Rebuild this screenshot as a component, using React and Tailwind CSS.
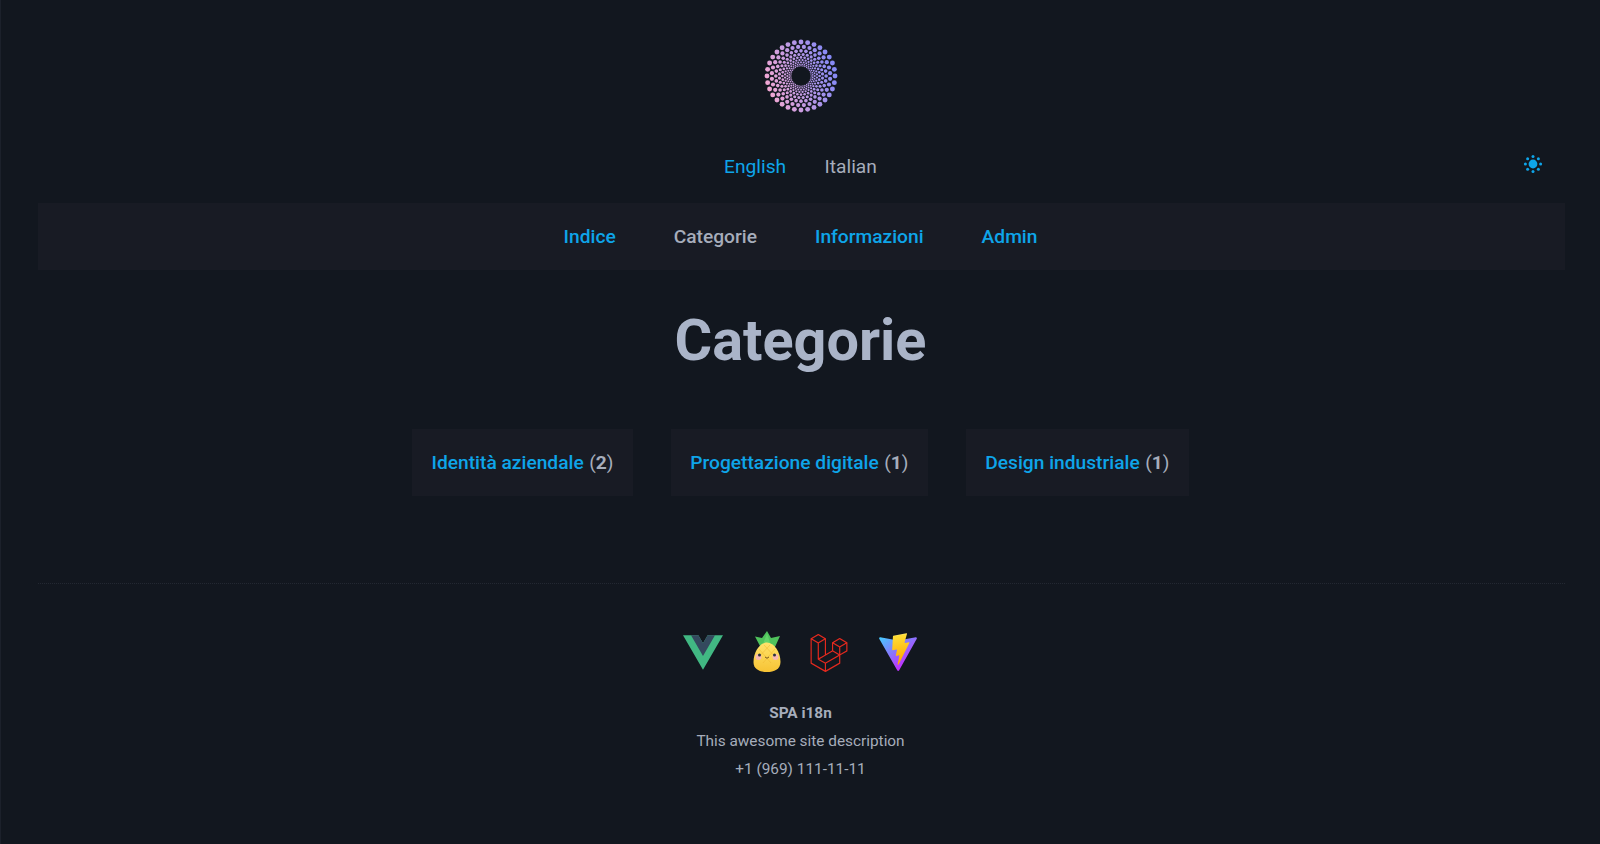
import { SiLaravel } from 'react-icons/si';

const categories = [
  { name: 'Identità aziendale', count: 2 },
  { name: 'Progettazione digitale', count: 1 },
  { name: 'Design industriale', count: 1 },
];

function Logo() {
  const dots = [];
  let r = 34;
  let i = 0;
  // rings shrink by a fixed ratio towards the hole
  while (r > 10) {
    for (let k = 0; k < 32; k++) {
      const a = ((k + (i % 2) / 2) / 32) * Math.PI * 2 - Math.PI / 2;
      dots.push(
        <circle key={`${i}-${k}`} cx={40 + r * Math.cos(a)} cy={40 + r * Math.sin(a)} r={r * 0.072} fill="url(#logoGrad)" />
      );
    }
    r *= 0.86;
    i++;
  }
  return (
    <svg width="80" height="80" viewBox="0 0 80 80">
      <defs>
        <linearGradient id="logoGrad" gradientUnits="userSpaceOnUse" x1="4" y1="52" x2="76" y2="28">
          <stop offset="0" stopColor="#f5a8d2" />
          <stop offset="1" stopColor="#8088f8" />
        </linearGradient>
      </defs>
      {dots}
    </svg>
  );
}

function SunIcon() {
  const rays = [0, 45, 90, 135, 180, 225, 270, 315];
  return (
    <svg width="20" height="20" viewBox="0 0 20 20" fill="#0ea5e9">
      <circle cx="10" cy="10" r="4.4" />
      {rays.map((d) => (
        <circle key={d} cx={10 + 7.6 * Math.cos((d * Math.PI) / 180)} cy={10 + 7.6 * Math.sin((d * Math.PI) / 180)} r="1.5" />
      ))}
    </svg>
  );
}

function VueIcon() {
  return (
    <svg width="40" height="35" viewBox="0 0 261.76 226.69">
      <path d="M161.096.001l-30.225 52.351L100.647.001H-.005l130.877 226.688L261.749.001z" fill="#41b883" />
      <path d="M161.096.001l-30.225 52.351L100.647.001H52.346l78.526 136.01L209.398.001z" fill="#34495e" />
    </svg>
  );
}

function PiniaIcon() {
  return (
    <svg width="28" height="41" viewBox="0 0 28 41" className="-mt-[2px]">
      <defs>
        <linearGradient id="piniaBody" x1="0" y1="0" x2="0" y2="1">
          <stop offset="0" stopColor="#ffe36b" />
          <stop offset="1" stopColor="#f7c334" />
        </linearGradient>
      </defs>
      <path d="M7 15 L2 5.5 L9 7 L14 0 L18 7 L27 5 L22 16 Z" fill="#4fc25c" />
      <path d="M10 13 L14 2.5 L17.5 13 Z" fill="#62d36a" />
      <path d="M14 11.5 C21 11.5 27.5 21 27.5 31 C27.5 38.5 21 41 14 41 C7 41 0.5 38.5 0.5 31 C0.5 21 7 11.5 14 11.5 Z" fill="url(#piniaBody)" />
      <path d="M6 18 L18 32 M11 14 L24 28 M22 18 L10 32 M17 14 L4 28" stroke="#eeb52f" strokeWidth="0.5" fill="none" />
      <circle cx="5.5" cy="26" r="3" fill="#f7b3c2" opacity="0.85" />
      <circle cx="22.5" cy="26" r="3" fill="#f7b3c2" opacity="0.85" />
      <circle cx="6.5" cy="24" r="1.5" fill="#2d3340" />
      <circle cx="21.5" cy="24" r="1.5" fill="#2d3340" />
      <path d="M12 26 Q14 28.5 16 26" stroke="#6b4f1d" strokeWidth="0.9" fill="none" />
    </svg>
  );
}

function ViteIcon() {
  return (
    <svg width="40" height="39" viewBox="0 0 410 404">
      <defs>
        <linearGradient id="viteA" gradientUnits="userSpaceOnUse" x1="6" y1="33" x2="235" y2="344">
          <stop stopColor="#41D1FF" />
          <stop offset="1" stopColor="#BD34FE" />
        </linearGradient>
        <linearGradient id="viteB" gradientUnits="userSpaceOnUse" x1="194.651" y1="8.818" x2="236.076" y2="292.989">
          <stop stopColor="#FFEA83" />
          <stop offset="0.0833" stopColor="#FFDD35" />
          <stop offset="1" stopColor="#FFA800" />
        </linearGradient>
      </defs>
      <path d="M399.641 59.5246L215.643 388.545C211.844 395.338 202.084 395.378 198.228 388.618L10.5817 59.5563C6.38087 52.1896 12.6802 43.2665 21.0281 44.7586L205.223 77.6824C206.398 77.8924 207.601 77.8904 208.776 77.6763L389.119 44.8058C397.439 43.2894 403.768 52.1434 399.641 59.5246Z" fill="url(#viteA)" />
      <path d="M292.965 1.5744L156.801 28.2552C154.563 28.6937 152.906 30.5903 152.771 32.8664L144.395 174.33C144.198 177.662 147.258 180.248 150.51 179.498L188.42 170.749C191.967 169.931 195.172 173.055 194.443 176.622L183.18 231.775C182.422 235.487 185.907 238.661 189.532 237.56L212.947 230.446C216.577 229.344 220.065 232.527 219.297 236.242L201.398 322.875C200.278 328.294 207.486 331.249 210.492 326.603L212.5 323.5L323.454 102.072C325.312 98.3645 322.108 94.137 318.036 94.9228L279.014 102.454C275.347 103.161 272.227 99.746 273.262 96.1583L298.731 7.86689C299.767 4.27314 296.636 0.855181 292.965 1.5744Z" fill="url(#viteB)" />
    </svg>
  );
}

export default function App() {
  return (
    <div className="min-h-screen bg-[#12171f] border-l border-[#1c212b] text-[#a6adbb] font-['Roboto',sans-serif]">
      <div className="flex justify-center pt-9">
        <Logo />
      </div>

      <div className="relative mt-[37px] flex h-7 items-center justify-center gap-[38.4px] text-[19.2px]">
        <a className="text-[#0ea5e9]">English</a>
        <a>Italian</a>
        <div className="absolute right-[57px] top-[1px]">
          <SunIcon />
        </div>
      </div>

      <nav className="ml-[37px] mr-[35px] mt-[22px] flex h-[67px] items-center justify-center gap-[58px] bg-[#181b24] pt-[2px] pr-[2px] text-[19.2px] font-medium">
        <a className="text-[#0ea5e9]">Indice</a>
        <a>Categorie</a>
        <a className="text-[#0ea5e9]">Informazioni</a>
        <a className="text-[#0ea5e9]">Admin</a>
      </nav>

      <h1 className="mt-[41px] text-center text-[57.6px] font-bold leading-[60px] text-[#aab4c8]">Categorie</h1>

      <div className="mt-[58px] flex justify-center gap-[38.4px]">
        {categories.map((c) => (
          <div key={c.name} className="flex h-[67px] items-center bg-[#181b24] px-[19.2px] pt-[2px] text-[19.2px]">
            <a className="font-medium text-[#0ea5e9]">{c.name}</a>
            <span className="ml-[5.5px]">
              (<b className="font-bold">{c.count}</b>)
            </span>
          </div>
        ))}
      </div>

      <div className="ml-[37px] mr-[35px] mt-[87px] border-t border-dotted border-[#232832]" />

      <div className="mt-[48px] flex h-[41px] items-center justify-center gap-[29.5px]">
        <VueIcon />
        <PiniaIcon />
        <SiLaravel size={38} color="#e3291e" />
        <ViteIcon />
      </div>

      <footer className="mt-[26px] text-center text-[15.36px] leading-7">
        <p className="font-bold">SPA i18n</p>
        <p>This awesome site description</p>
        <p>+1 (969) 111-11-11</p>
      </footer>
    </div>
  );
}
